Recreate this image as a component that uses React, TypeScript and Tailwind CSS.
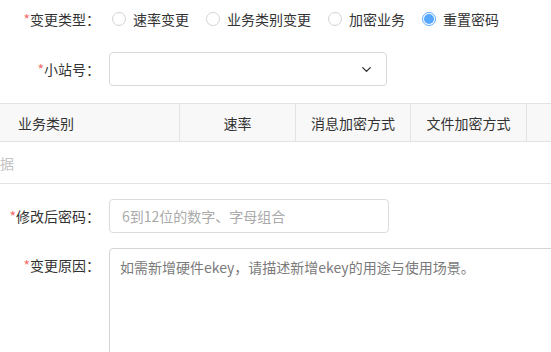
import React from "react";
import { ChevronDown } from "lucide-react";

const radios = [
  { label: "速率变更", checked: false },
  { label: "业务类别变更", checked: false },
  { label: "加密业务", checked: false },
  { label: "重置密码", checked: true },
];

function FormLabel({ text }: { text: string }) {
  return (
    <label className="w-[100px] shrink-0 text-right text-[14px] text-[#333]">
      <span className="text-[#f56c6c]">*</span>
      {text}：
    </label>
  );
}

function Radio({ label, checked }: { label: string; checked: boolean }) {
  return (
    <label className="mr-[17px] flex items-center gap-[7px] text-[14px] text-[#333]">
      {checked ? (
        <span className="flex h-[14px] w-[14px] items-center justify-center rounded-full border border-[#5ba8ff]">
          <span className="h-[10px] w-[10px] rounded-full bg-[#57a6ff]" />
        </span>
      ) : (
        <span className="h-[14px] w-[14px] rounded-full border border-[#d4d4d4] bg-white" />
      )}
      {label}
    </label>
  );
}

export default function App() {
  return (
    <div className="h-[352px] w-[551px] overflow-hidden bg-white font-['Noto_Sans_CJK_SC',sans-serif] leading-none">
      {/* 变更类型 */}
      <div className="mt-[2px] flex h-[34px] items-center">
        <FormLabel text="变更类型" />
        <div className="ml-[12px] flex items-center">
          {radios.map((r) => (
            <Radio key={r.label} label={r.label} checked={r.checked} />
          ))}
        </div>
      </div>

      {/* 小站号 */}
      <div className="mt-[16px] flex h-[34px] items-center">
        <FormLabel text="小站号" />
        <div className="ml-[9px] flex h-[34px] w-[278px] items-center justify-end rounded-[4px] border border-[#d9d9d9] pr-[12px]">
          <ChevronDown size={15} strokeWidth={2.2} className="text-[#333]" />
        </div>
      </div>

      {/* table */}
      <div className="mt-[17px] w-[620px] border-t border-[#e3e3e3]">
        <div className="flex h-[38px] border-b border-[#e3e3e3] bg-[#f8f8f8] text-[14px] text-[#333]">
          <div className="flex w-[180px] items-center border-r border-[#e3e3e3] pl-[18px]">业务类别</div>
          <div className="flex w-[116px] items-center justify-center border-r border-[#e3e3e3]">速率</div>
          <div className="flex w-[115px] items-center justify-center border-r border-[#e3e3e3]">消息加密方式</div>
          <div className="flex w-[116px] items-center justify-center border-r border-[#e3e3e3]">文件加密方式</div>
          <div className="flex-1" />
        </div>
        <div className="flex h-[42px] items-center border-b border-[#e3e3e3]">
          <span className="text-[14px] text-[#c4c4c4]">据</span>
        </div>
      </div>

      {/* 修改后密码 */}
      <div className="mt-[15px] flex h-[34px] items-center">
        <FormLabel text="修改后密码" />
        <div className="ml-[9px] flex h-[34px] w-[280px] items-center rounded-[4px] border border-[#dcdcdc] px-[12px] text-[14px] text-[#aaa]">
          6到12位的数字、字母组合
        </div>
      </div>

      {/* 变更原因 */}
      <div className="mt-[15px] flex items-start">
        <div className="flex h-[34px] items-center">
          <FormLabel text="变更原因" />
        </div>
        <div className="ml-[9px] h-[130px] w-[460px] shrink-0 rounded-[4px] border border-[#d4d4d4] px-[10px] pt-[11px] text-[14px] text-[#7a7a7a]">
          如需新增硬件ekey，请描述新增ekey的用途与使用场景。
        </div>
      </div>
    </div>
  );
}
